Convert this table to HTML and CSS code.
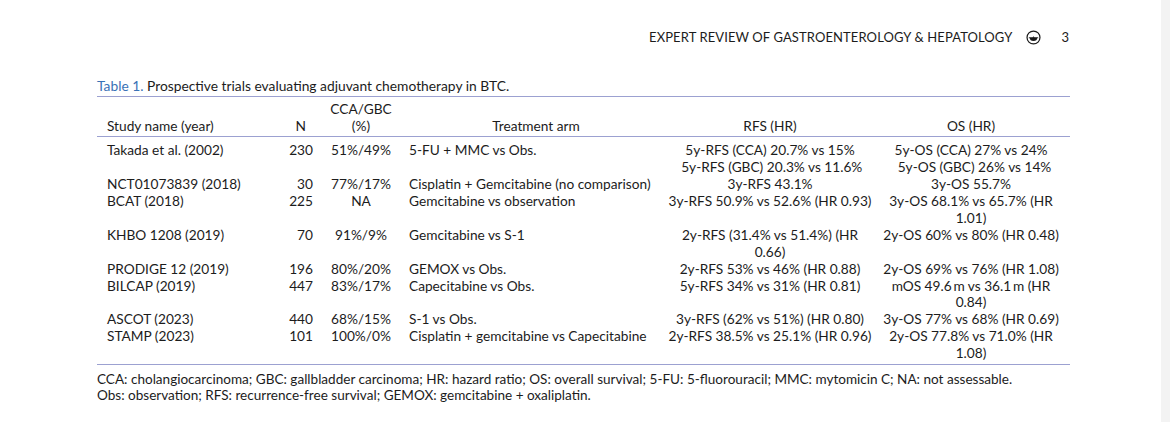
FILE: index.html
```html
<!DOCTYPE html>
<html lang="en">
<head>
<meta charset="utf-8">
<title>Table 1</title>
<link rel="stylesheet" href="styles.css">
</head>
<body>
<div class="page">
  <header class="running">
    <span class="journal">EXPERT REVIEW OF GASTROENTEROLOGY &amp; HEPATOLOGY</span>
    <svg class="logo" viewBox="-8 -8 16 16" width="15" height="15" aria-hidden="true">
      <circle cx="0" cy="0" r="6.9" fill="none" stroke="#1b1b1b" stroke-width="1.3"/>
      <line x1="-5" y1="0.3" x2="5" y2="0.3" stroke="#1b1b1b" stroke-width="1"/>
      <path d="M-3.9 0.3 A3.9 3.5 0 0 0 3.9 0.3 Z" fill="#1b1b1b"/>
      <path d="M-1.2 0.3 L0 -1.4 L1.2 0.3 Z" fill="#1b1b1b"/>
    </svg>
    <span class="folio">3</span>
  </header>

  <section class="tbl">
    <div class="caption"><span class="label">Table 1.</span> Prospective trials evaluating adjuvant chemotherapy in BTC.</div>
    <table>
      <colgroup>
        <col class="c-study"><col class="c-n"><col class="c-pct"><col class="c-arm"><col class="c-rfs"><col class="c-os">
      </colgroup>
      <thead>
        <tr>
          <th class="study">Study name (year)</th>
          <th class="n hn">N</th>
          <th class="pct">CCA/GBC<br>(%)</th>
          <th class="arm-h">Treatment arm</th>
          <th class="ctr">RFS (HR)</th>
          <th class="ctr">OS (HR)</th>
        </tr>
      </thead>
      <tbody>
        <tr>
          <td class="study">Takada et al. (2002)</td>
          <td class="n">230</td>
          <td class="pct">51%/49%</td>
          <td class="arm">5-FU + MMC vs Obs.</td>
          <td class="ctr">5y-RFS (CCA) 20.7% vs 15%<br>&nbsp;5y-RFS (GBC) 20.3% vs 11.6%</td>
          <td class="ctr">5y-OS (CCA) 27% vs 24%<br>&nbsp;&nbsp;5y-OS (GBC) 26% vs 14%</td>
        </tr>
        <tr>
          <td class="study">NCT01073839 (2018)</td>
          <td class="n">30</td>
          <td class="pct">77%/17%</td>
          <td class="arm">Cisplatin + Gemcitabine (no comparison)</td>
          <td class="ctr">3y-RFS 43.1%</td>
          <td class="ctr">3y-OS 55.7%</td>
        </tr>
        <tr>
          <td class="study">BCAT (2018)</td>
          <td class="n">225</td>
          <td class="pct">NA</td>
          <td class="arm">Gemcitabine vs observation</td>
          <td class="ctr">3y-RFS 50.9% vs 52.6% (HR 0.93)</td>
          <td class="ctr">3y-OS 68.1% vs 65.7% (HR<br>1.01)</td>
        </tr>
        <tr>
          <td class="study">KHBO 1208 (2019)</td>
          <td class="n">70</td>
          <td class="pct">91%/9%</td>
          <td class="arm">Gemcitabine vs S-1</td>
          <td class="ctr">2y-RFS (31.4% vs 51.4%) (HR<br>0.66)</td>
          <td class="ctr">2y-OS 60% vs 80% (HR 0.48)</td>
        </tr>
        <tr>
          <td class="study">PRODIGE 12 (2019)</td>
          <td class="n">196</td>
          <td class="pct">80%/20%</td>
          <td class="arm">GEMOX vs Obs.</td>
          <td class="ctr">2y-RFS 53% vs 46% (HR 0.88)</td>
          <td class="ctr">2y-OS 69% vs 76% (HR 1.08)</td>
        </tr>
        <tr>
          <td class="study">BILCAP (2019)</td>
          <td class="n">447</td>
          <td class="pct">83%/17%</td>
          <td class="arm">Capecitabine vs Obs.</td>
          <td class="ctr">5y-RFS 34% vs 31% (HR 0.81)</td>
          <td class="ctr">mOS 49.6&#8201;m vs 36.1&#8201;m (HR<br>0.84)</td>
        </tr>
        <tr>
          <td class="study">ASCOT (2023)</td>
          <td class="n">440</td>
          <td class="pct">68%/15%</td>
          <td class="arm">S-1 vs Obs.</td>
          <td class="ctr">3y-RFS (62% vs 51%) (HR 0.80)</td>
          <td class="ctr">3y-OS 77% vs 68% (HR 0.69)</td>
        </tr>
        <tr>
          <td class="study">STAMP (2023)</td>
          <td class="n">101</td>
          <td class="pct">100%/0%</td>
          <td class="arm">Cisplatin + gemcitabine vs Capecitabine</td>
          <td class="ctr">2y-RFS 38.5% vs 25.1% (HR 0.96)</td>
          <td class="ctr">2y-OS 77.8% vs 71.0% (HR<br>1.08)</td>
        </tr>
      </tbody>
    </table>
    <p class="notes">CCA: cholangiocarcinoma; GBC: gallbladder carcinoma; HR: hazard ratio; OS: overall survival; 5-FU: 5-fluorouracil; MMC: mytomicin C; NA: not assessable.<br>Obs: observation; RFS: recurrence-free survival; GEMOX: gemcitabine + oxaliplatin.</p>
  </section>
</div>
</body>
</html>
```

FILE: styles.css
```css
* { box-sizing: border-box; }

body {
  margin: 0;
  background: #f3f3f3;
  font-family: Lato, "Open Sans", "Liberation Sans", sans-serif;
  color: #1c1c1c;
}

.page {
  width: 1161px;
  height: 422px;
  background: #fff;
  overflow: hidden;
}

/* running head */
.running {
  display: flex;
  justify-content: flex-end;
  align-items: center;
  padding: 28px 92px 0 0;
  height: 46px;
  line-height: 18px;
  font-size: 13px;
}
.journal { letter-spacing: 0.1px; }
.logo { margin-left: 14px; display: block; }
.folio { margin-left: 20px; }

/* table block */
.tbl {
  padding-left: 97px;
  width: 1070px;
}

.caption {
  margin-top: 31px;
  font-size: 13.8px;
  line-height: 17px;
  padding-bottom: 1.5px;
  border-bottom: 1px solid #9ca1d1;
}
.caption .label { color: #3a72b6; }

table {
  width: 973px;
  table-layout: fixed;
  border-collapse: collapse;
  font-size: 13.7px;
  line-height: 16.9px;
}

.c-study { width: 186px; }
.c-n { width: 35px; }
.c-pct { width: 86px; }
.c-arm { width: 264px; }
.c-rfs { width: 204px; }
.c-os { width: 198px; }

th, td {
  padding: 0;
  font-weight: normal;
  white-space: nowrap;
  vertical-align: top;
}

thead th {
  vertical-align: bottom;
  border-bottom: 1px solid #9ca1d1;
}
thead tr th { padding-top: 4.5px; padding-bottom: 1.5px; }

tbody tr:first-child td { padding-top: 5px; }
tbody tr:last-child td { padding-bottom: 1.5px; border-bottom: 1px solid #9ca1d1; }

.study { text-align: left; padding-left: 10px; }
.n { text-align: right; padding-right: 5px; }
.hn { padding-right: 12px; }
.pct { text-align: center; }
.arm { text-align: left; padding-left: 5px; }
.arm-h { text-align: center; }
.ctr { text-align: center; }

.notes {
  margin: 6px 0 0;
  font-size: 13.55px;
  line-height: 16px;
  white-space: nowrap;
}
```
